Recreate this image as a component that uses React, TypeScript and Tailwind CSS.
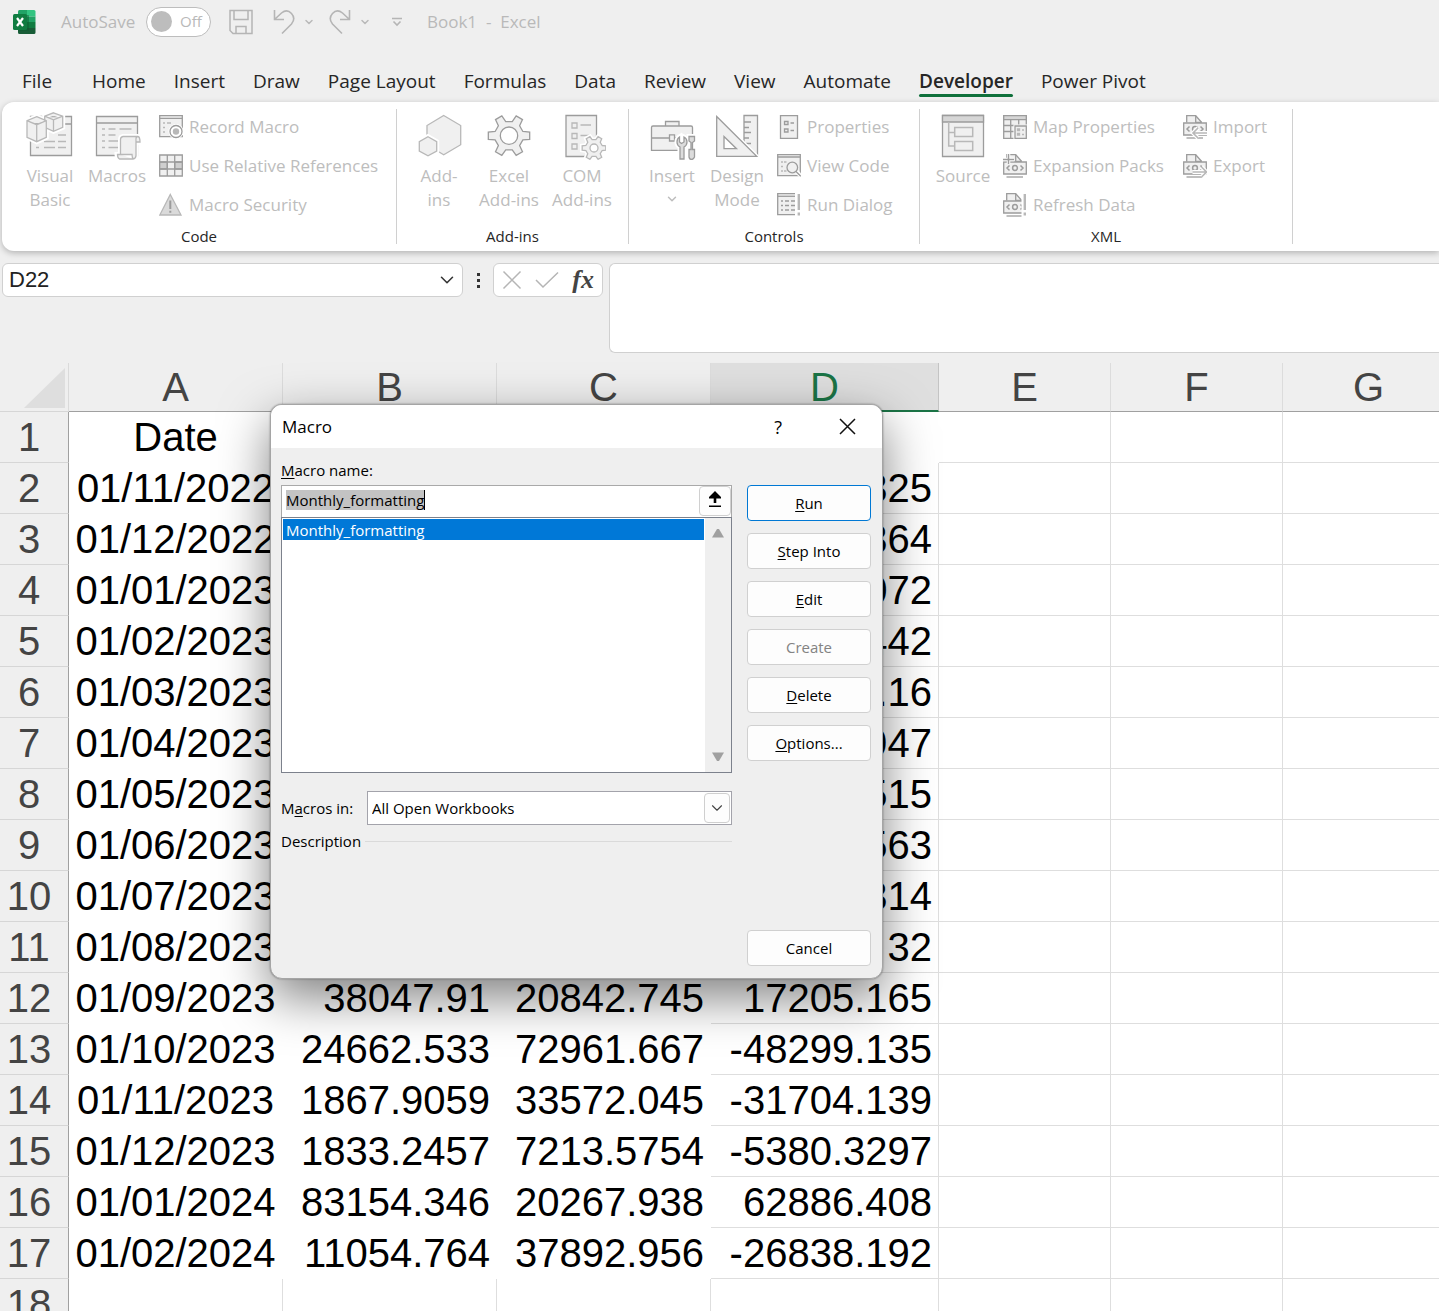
import React from 'react';
import { ChevronDown } from 'lucide-react';

const D = '#9c9c9c';
const L = '#b8b8b8';
const F = '#f0f0f0';

const Big: React.FC<{ children: React.ReactNode }> = ({ children }) => (
    <svg width="48" height="48" viewBox="0 0 48 48" fill="none" stroke={D} strokeWidth="1.3" aria-hidden="true">
        {children}
    </svg>
);

const Small: React.FC<{ children: React.ReactNode }> = ({ children }) => (
    <svg width="24" height="24" viewBox="0 0 24 24" fill="none" stroke={D} strokeWidth="1.3" className="shrink-0" aria-hidden="true">
        {children}
    </svg>
);

const gearPath = (cx: number, cy: number, outer: number, inner: number) => {
    const pts: string[] = [];
    for (let i = 0; i < 6; i++) {
        [[-17, inner], [-10, outer], [10, outer], [17, inner]].forEach(([deg, r]) => {
            const a = ((i * 60 + deg) * Math.PI) / 180;
            pts.push(`${(cx + r * Math.cos(a)).toFixed(2)} ${(cy + r * Math.sin(a)).toFixed(2)}`);
        });
    }
    return `M${pts.join('L')}Z`;
};

const VisualBasicIcon = () => (
    <Big>
        <path d="M4.5 4.5h41v39h-41zM4.5 12h41" fill={F} />
        <path d="M32 23h8M18 29.5h11M32 29.5h8M10 35.5h3M18 35.5h11M32 35.5h8" stroke={L} />
        <path d="M10.7 4.7l9.6 4v16.6l-9.6 4.4L1 25.3V8.7z" stroke="#fff" strokeWidth="5" />
        <path d="M27.5.8l9.2 3.4v11.1l-9.2 4-8.8-4V4.2z" stroke="#fff" strokeWidth="5" />
        <path d="M27.5.8l9.2 3.4v11.1l-9.2 4-8.8-4V4.2zM18.7 4.2l8.8 3.6 9.2-3.6M27.5 7.8v11.5" fill={F} stroke={L} />
        <path d="M10.7 4.7l9.6 4v16.6l-9.6 4.4L1 25.3V8.7zM1 8.7l9.7 4 9.6-4M10.7 12.7v17" fill={F} stroke={L} />
    </Big>
);

const MacrosIcon = () => (
    <Big>
        <path d="M3.5 4.5h41v39h-41zM3.5 11h41" fill={F} />
        <path d="M9 17h3M15.5 17h7M26.5 17h12M9 23h3M15.5 23h7M9 29h3M15.5 29h10M9 35.5h3M15.5 35.5h10" stroke={L} />
        <path d="M30 24.5h15q2.5 1 2.5 6h-4.5v13q0 3-3 3.5H26q-2-1-2-4.500h3.500V27.500q0-2.500 2.500-3z" stroke="#fff" strokeWidth="5" fill="#fff" />
        <path d="M30 24.500q-2.500.5-2.500 3v15H24.500q0 3.500 2 4.500H40q3-.5 3-3.500V27q0-2.500 2-2.500zM45 24.500q2 .5 2 5.500h-4M27.500 42.500h11.500q0 3.500 1.500 4.500" fill={F} stroke={L} />
    </Big>
);

const HexagonsIcon = () => (
    <Big>
        <path d="M28.700 3.500l17 10v19.200l-17 10-16.700-10V13.500z" fill={F} stroke={L} />
        <path d="M13 24.700l8.700 5V39L13 43.800 4.300 39v-9.300z" fill="#fff" stroke="#fff" strokeWidth="5" />
        <path d="M13 24.700l8.700 5V39L13 43.800 4.300 39v-9.300z" fill={F} stroke={L} />
    </Big>
);

const GearIcon = () => (
    <Big>
        <path d={gearPath(24, 23.7, 21, 14.5)} fill={F} />
        <circle cx="24" cy="23.700" r="8.700" fill="#fff" />
    </Big>
);

const ComIcon = () => (
    <Big>
        <path d="M8 3.500h30.500v41H8z" fill={F} />
        <path d="M14 11h5v5h-5zM14 21.500h5v5h-5zM14 32h5v5h-5zM22.500 13H33M22.500 23.500H33" stroke={L} />
        <path d={gearPath(36, 36, 12, 8.5)} fill="#fff" stroke="#fff" strokeWidth="4.500" />
        <path d={gearPath(36, 36, 12, 8.5)} fill={F} stroke={L} />
        <circle cx="36" cy="36" r="4" fill="#fff" stroke={L} />
    </Big>
);

const ToolboxIcon = () => (
    <Big>
        <path d="M17.500 14V9.500h13.500V14M3.500 15.500q0-1.500 1.500-1.500h38q1.500 0 1.500 1.500v22.800h-41zM3.500 26h18M27 26h5" fill={F} />
        <path d="M21.500 22.800h5v6.200h-5z" fill={F} />
        <path d="M31.500 25v5l2 1.500 2.500-1.500v-5q3 1.500 3 5t-3 5V47h-4V35q-3-1.500-3-5t2.500-5zM41 24.500h5.500V29l-2 1.500v7h2V45q-1 2.500-3 2.500T41 45v-7.500h2v-7L41 29z" fill="#fff" stroke="#fff" strokeWidth="5" />
        <path d="M31.500 25v5l2 1.500 2.500-1.500v-5q3 1.500 3 5t-3 5V47h-4V35q-3-1.500-3-5t2.500-5z" fill="#dcdcdc" stroke={D} />
        <path d="M41 24.500h5.500V29l-2 1.500v7h2V45q-1 2.500-3 2.500T41 45v-7.500h2v-7L41 29z" fill="#dcdcdc" stroke={D} />
    </Big>
);

const DesignIcon = () => (
    <Big>
        <path d="M31 3.500h13.500v41H31z" fill={F} />
        <path d="M31 10h7M31 15.500h5M31 20.500h7M31 26h5M31 31.500h7" />
        <path d="M3.700 4.500l40 39.800h-40z" fill={F} stroke="#fff" strokeWidth="4" />
        <path d="M3.700 4.500l40 39.800h-40z" fill={F} />
        <path d="M11 24.500l12.500 12.200H11z" fill="#fff" />
    </Big>
);

const SourceIcon = () => (
    <Big>
        <path d="M3.500 3.500h41v41h-41z" fill={F} />
        <path d="M3.500 3.500h41V10h-41z" fill="#d6d6d6" />
        <path d="M9.700 10v24h6M9.700 20.500h6M15.700 15.500h18v9h-18zM15.700 29.500h18v9h-18z" stroke={L} strokeWidth="1.500" />
    </Big>
);

const RecordIcon = () => (
    <Small>
        <path d="M.7.7h22.600v21H.7zM.7 3.300h22.600" fill={F} />
        <path d="M4 8h2M8 8h4M4 12.500h2M4 17h2" stroke={L} />
        <circle cx="17" cy="16.500" r="7.500" fill="#fff" stroke="none" />
        <circle cx="17" cy="16.500" r="6" fill="#fff" stroke={D} />
        <circle cx="17" cy="16.500" r="3.200" fill={L} stroke="none" />
    </Small>
);

const GridIcon = () => (
    <Small>
        <path d="M.7 1h22.600v21H.7z" fill={F} />
        <path d="M.7 8h7.600v7H.7zM15.700 8h7.600v7h-7.600z" fill="#cfcfcf" />
        <path d="M.7 8h22.600M.7 15h22.600M8.300 1v21M15.700 1v21" />
    </Small>
);

const WarningIcon = () => (
    <Small>
        <path d="M11.300 1.500L22 22H.8z" fill="#dadada" stroke={L} />
        <path d="M11.300 7.500V16M11.300 17.800v2" strokeWidth="2" />
    </Small>
);

const PropertiesIcon = () => (
    <Small>
        <path d="M3.500.7h17v22.600h-17z" fill={F} />
        <path d="M7.500 6.500H11v3H7.500zM7.500 14H11v3H7.500zM13.500 8H17M13.500 15.500H17" />
    </Small>
);

const ViewCodeIcon = () => (
    <Small>
        <path d="M.7.7h22.600v21H.7zM.7 3h22.600" fill={F} />
        <path d="M4 8h2M7 8h2.500M4 12.500h2M4 17h2M7 17h2.500" stroke={L} />
        <path d="M19 17l5 5" stroke="#fff" strokeWidth="4" />
        <circle cx="15.300" cy="13.500" r="5.300" fill={F} stroke={D} />
        <path d="M19 17.500l4.700 4.700" />
    </Small>
);

const RunDialogIcon = () => (
    <Small>
        <path d="M18 .7H.7v21H18" fill={F} />
        <path d="M.7 3.300H18" />
        <path d="M4 8h2M8 8h4M14 8h4M4 12.500h2M8 12.500h4M14 12.500h4M4 17h2M8 17h4M14 17h4" />
        <path d="M21.800 1v16M21.800 19.500v3" stroke={L} strokeWidth="2.400" />
    </Small>
);

const MapPropertiesIcon = () => (
    <Small>
        <path d="M.7.7h22.600v22.600H.7z" fill={F} />
        <path d="M.7.7h22.600v4H.7z" fill="#d6d6d6" />
        <path d="M.7 10.500h22.600M.7 16.500h12M7.700 4.700v18.600M15.700 4.700v6" />
        <path d="M10.500 9.500H24V24H10.500z" fill="#fff" stroke="none" />
        <path d="M12 11h11.300v12.300H12z" fill={F} />
        <path d="M14.500 14h2v1.500h-2zM14.500 18.500h2V20h-2zM19 15h2M19 19.500h2" stroke={L} />
    </Small>
);

const XmlDocIcon: React.FC<{ kind: 'import' | 'export' | 'expand' | 'refresh' }> = ({ kind }) => (
    <Small>
        <path d="M3.700 7.500V.7h9l6 6.800" fill={F} />
        <path d="M12.700.7v6.800h6" />
        <path d="M.7 8h22.600v12H.7z" fill={F} />
        <path d="M3.500 23H20" />
        <path d="M6.500 11.500L4 14l2.500 2.500M17.500 11.500L20 14l-2.500 2.500" strokeWidth="1.500" />
        <circle cx="12" cy="14" r="2.400" strokeWidth="1.500" />
        {kind === 'import' && (
            <>
                <path d="M10.500 18H24M15 13l-5 5 5 5" stroke="#fff" strokeWidth="4" />
                <path d="M10.500 18H24M15 13l-5 5 5 5" stroke={L} strokeWidth="1.600" />
            </>
        )}
        {kind === 'export' && (
            <>
                <path d="M9.500 18H23M18.500 13l5 5-5 5" stroke="#fff" strokeWidth="4" />
                <path d="M9.500 18H23M18.500 13l5 5-5 5" stroke={L} strokeWidth="1.600" />
            </>
        )}
        {kind === 'expand' && (
            <>
                <path d="M0 5.500h11M5.500 0v10" stroke="#fff" strokeWidth="3.500" />
                <path d="M0 5.500h11M5.500 0v10" strokeWidth="1.500" />
            </>
        )}
        {kind === 'refresh' && (
            <>
                <path d="M21.500 0v24" stroke="#fff" strokeWidth="6" />
                <path d="M21.800 1v16M21.800 19.500v3" stroke={L} strokeWidth="2.400" />
            </>
        )}
    </Small>
);

const BigButton: React.FC<{ icon: React.ReactNode; lines: string[]; width: string; menu?: boolean }> = ({ icon, lines, width, menu }) => (
    <button className={`${width} flex flex-col items-center pt-[3px] text-[17px] leading-6 text-[#bdbdbd]`}>
        {icon}
        <span className="mt-1 block">{lines[0]}</span>
        {lines[1] && <span className="block">{lines[1]}</span>}
        {menu && <ChevronDown size={14} className="mt-1" strokeWidth={2.5} />}
    </button>
);

const SmallButton: React.FC<{ icon: React.ReactNode; label: string }> = ({ icon, label }) => (
    <button className="flex h-9 items-center gap-1.5 whitespace-nowrap text-[17px] text-[#bdbdbd]">
        {icon}
        {label}
    </button>
);

const Group: React.FC<{ title: string; width: string; pad: string; children: React.ReactNode }> = ({ title, width, pad, children }) => (
    <section className={`${width} my-[7px] flex shrink-0 flex-col border-r border-[#d0d0d0]`}>
        <div className={`${pad} flex flex-1 items-start`}>{children}</div>
        <h2 className="text-center text-[15px] leading-4 text-[#262626]">{title}</h2>
    </section>
);

const tabs = ['File', 'Home', 'Insert', 'Draw', 'Page Layout', 'Formulas', 'Data', 'Review', 'View', 'Automate', 'Developer', 'Power Pivot'];

const columns = ['A', 'B', 'C', 'D', 'E', 'F', 'G'];

const rows: string[][] = [
    ['Date', '', '', ''],
    ['01/11/2022', '', '', '325'],
    ['01/12/2022', '', '', '364'],
    ['01/01/2023', '', '', '072'],
    ['01/02/2023', '', '', '442'],
    ['01/03/2023', '', '', '.16'],
    ['01/04/2023', '', '', '947'],
    ['01/05/2023', '', '', '515'],
    ['01/06/2023', '', '', '563'],
    ['01/07/2023', '', '', '314'],
    ['01/08/2023', '', '', '32'],
    ['01/09/2023', '38047.91', '20842.745', '17205.165'],
    ['01/10/2023', '24662.533', '72961.667', '-48299.135'],
    ['01/11/2023', '1867.9059', '33572.045', '-31704.139'],
    ['01/12/2023', '1833.2457', '7213.5754', '-5380.3297'],
    ['01/01/2024', '83154.346', '20267.938', '62886.408'],
    ['01/02/2024', '11054.764', '37892.956', '-26838.192'],
    ['', '', '', ''],
];

const cellBorder = (row: number, col: number) => {
    const last = row === rows.length - 1;
    if (col < 3) return last ? 'border-[#dedede]' : 'border-transparent';
    if (col === 3 && row === 0) return 'border-transparent';
    return 'border-[#dedede]';
};

const TitleBar = () => (
    <header className="flex h-[43px] shrink-0 items-center pl-[13px] text-[17px] text-[#b9b9b9]">
        <svg width="24" height="24" viewBox="0 0 24 24" aria-label="Excel" className="shrink-0">
            <path d="M5 1.500Q5 0 6.500 0H14v6.500H5z" fill="#21a366" />
            <path d="M14 0h7q1.500 0 1.500 1.500v5H14z" fill="#33c481" />
            <path d="M5 6.500h9V12H5z" fill="#107c41" />
            <path d="M14 6.500h8.500V12H14z" fill="#21a366" />
            <path d="M14 12h8.500v6H14z" fill="#107c41" />
            <path d="M5 12h9v6h8.500v4.500Q22.500 24 21 24H6.500Q5 24 5 22.500z" fill="#185c37" />
            <path d="M5 5h10q1 0 1 1v14q0 1-1 1H5z" fill="#0b5a2f" opacity=".5" />
            <rect y="4" width="14" height="16" rx="1.500" fill="#107c41" />
            <path d="M4 8l6 8M10 8l-6 8" stroke="#fff" strokeWidth="2.200" />
        </svg>
        <span className="ml-6 w-[85px]">AutoSave</span>
        <button role="switch" aria-checked="false" aria-label="AutoSave" className="flex h-[30px] w-[65px] items-center gap-2 rounded-full border border-[#bdbdbd] bg-white pl-1 text-[15px]">
            <span className="h-[21px] w-[21px] rounded-full bg-[#bdbdbd]" />
            Off
        </button>
        <button aria-label="Save" className="ml-[18px]">
            <svg width="24" height="26" viewBox="0 0 24 26" fill="none" stroke="#b5b5b5" strokeWidth="1.500">
                <path d="M1 1.500h22v23H4l-3-3zM5 1.500v9h14v-9M7 24.500v-7h10v7" />
            </svg>
        </button>
        <button aria-label="Undo" className="ml-5 flex items-center gap-2">
            <svg width="22" height="26" viewBox="0 0 22 26" fill="none" stroke="#b5b5b5" strokeWidth="1.600">
                <path d="M1.500 1v9.500H11M1.500 10.500L8.500 4Q14-.5 18.500 4.500t0 10.500L9 24.500" />
            </svg>
            <ChevronDown size={12} strokeWidth={3} />
        </button>
        <button aria-label="Redo" className="ml-3.5 flex items-center gap-2">
            <svg width="22" height="26" viewBox="0 0 22 26" fill="none" stroke="#b5b5b5" strokeWidth="1.600">
                <path d="M20.500 1v9.500H11M20.500 10.500L13.500 4Q8-.5 3.500 4.500t0 10.500L13 24.500" />
            </svg>
            <ChevronDown size={12} strokeWidth={3} />
        </button>
        <button aria-label="Customize Quick Access Toolbar" className="ml-5">
            <svg width="12" height="10" viewBox="0 0 12 10" fill="none" stroke="#b5b5b5" strokeWidth="1.600">
                <path d="M1 1.500h10M2.500 4.500L6 8l3.500-3.500" />
            </svg>
        </button>
        <span className="ml-6 whitespace-pre">Book1  -  Excel</span>
    </header>
);

const Tabs = () => (
    <nav className="flex h-[59px] shrink-0 items-start gap-7 pl-[22px] pt-[26px]">
        {tabs.map((tab) => (
            <button
                key={tab}
                className={`flex flex-col whitespace-nowrap text-[19px] leading-6 text-[#262626] ${tab === 'File' ? 'mr-3' : ''} ${tab === 'Developer' ? 'font-semibold' : ''}`}
            >
                {tab}
                {tab === 'Developer' && <span className="mt-px h-[3px] w-full rounded-full bg-[#0f703b]" />}
            </button>
        ))}
    </nav>
);

const Ribbon = () => (
    <div className="ml-0.5 flex h-[149px] shrink-0 rounded-l-xl bg-white shadow-[0_2px_6px_rgba(0,0,0,0.25)]">
        <Group title="Code" width="w-[395px]" pad="pl-[15px]">
            <BigButton icon={<VisualBasicIcon />} lines={['Visual', 'Basic']} width="w-[66px]" />
            <BigButton icon={<MacrosIcon />} lines={['Macros']} width="w-[68px]" />
            <div className="flex flex-col gap-[3px] pl-2">
                <SmallButton icon={<RecordIcon />} label="Record Macro" />
                <SmallButton icon={<GridIcon />} label="Use Relative References" />
                <SmallButton icon={<WarningIcon />} label="Macro Security" />
            </div>
        </Group>
        <Group title="Add-ins" width="w-[232px]" pad="px-[7px]">
            <BigButton icon={<HexagonsIcon />} lines={['Add-', 'ins']} width="w-[70px]" />
            <BigButton icon={<GearIcon />} lines={['Excel', 'Add-ins']} width="w-[70px]" />
            <BigButton icon={<ComIcon />} lines={['COM', 'Add-ins']} width="w-[76px]" />
        </Group>
        <Group title="Controls" width="w-[291px]" pad="pl-2.5">
            <BigButton icon={<ToolboxIcon />} lines={['Insert']} width="w-[66px]" menu />
            <BigButton icon={<DesignIcon />} lines={['Design', 'Mode']} width="w-[64px]" />
            <div className="flex flex-col gap-[3px] pl-2">
                <SmallButton icon={<PropertiesIcon />} label="Properties" />
                <SmallButton icon={<ViewCodeIcon />} label="View Code" />
                <SmallButton icon={<RunDialogIcon />} label="Run Dialog" />
            </div>
        </Group>
        <Group title="XML" width="w-[373px]" pad="pl-2.5">
            <BigButton icon={<SourceIcon />} lines={['Source']} width="w-[66px]" />
            <div className="flex w-[187px] flex-col gap-[3px] pl-[7px]">
                <SmallButton icon={<MapPropertiesIcon />} label="Map Properties" />
                <SmallButton icon={<XmlDocIcon kind="expand" />} label="Expansion Packs" />
                <SmallButton icon={<XmlDocIcon kind="refresh" />} label="Refresh Data" />
            </div>
            <div className="flex flex-col gap-[3px]">
                <SmallButton icon={<XmlDocIcon kind="import" />} label="Import" />
                <SmallButton icon={<XmlDocIcon kind="export" />} label="Export" />
            </div>
        </Group>
    </div>
);

const FormulaBar = () => (
    <div className="flex shrink-0 items-start pb-2.5 pl-0.5 pt-3">
        <div className="flex h-[34px] w-[461px] items-center rounded-md border border-[#d0d0d0] bg-white pr-1">
            <input
                aria-label="Name Box"
                defaultValue="D22"
                className="min-w-0 flex-1 bg-transparent pl-1.5 font-['Liberation_Sans',Arial,sans-serif] text-[22px] leading-7 text-[#222] outline-none"
            />
            <button aria-label="Name list">
                <ChevronDown size={22} strokeWidth={1.7} color="#333" />
            </button>
        </div>
        <div className="flex h-[34px] w-[30px] flex-col items-center justify-center gap-[3px]">
            <span className="h-[3px] w-[3px] bg-[#333]" />
            <span className="h-[3px] w-[3px] bg-[#333]" />
            <span className="h-[3px] w-[3px] bg-[#333]" />
        </div>
        <div className="flex h-[34px] w-[110px] items-center justify-between rounded-md border border-[#d0d0d0] bg-white px-2">
            <button aria-label="Cancel entry">
                <svg width="20" height="20" viewBox="0 0 20 20" stroke="#b5b5b5" strokeWidth="1.500">
                    <path d="M1.500 1.500l17 17M18.500 1.500l-17 17" />
                </svg>
            </button>
            <button aria-label="Enter">
                <svg width="24" height="18" viewBox="0 0 24 18" fill="none" stroke="#b5b5b5" strokeWidth="1.500">
                    <path d="M1 9l7 7L23 1.500" />
                </svg>
            </button>
            <button aria-label="Insert Function" className="font-['Liberation_Serif',serif] text-[26px] font-bold italic leading-7 text-[#444]">
                fx
            </button>
        </div>
        <textarea aria-label="Formula Bar" className="ml-1.5 h-[90px] flex-1 resize-none rounded-l-md border border-r-0 border-[#d0d0d0] bg-white outline-none" />
    </div>
);

const Sheet = () => (
    <div className="min-h-0 flex-1 overflow-hidden">
        <table className="w-[1455px] min-w-full table-fixed border-separate border-spacing-0 font-['Liberation_Sans',Arial,sans-serif] text-[40px] leading-[46px]">
            <colgroup>
                <col className="w-[69px]" />
                <col className="w-[214px]" />
                <col className="w-[214px]" />
                <col className="w-[214px]" />
                <col className="w-[228px]" />
                <col className="w-[172px]" />
                <col className="w-[172px]" />
                <col className="w-[172px]" />
            </colgroup>
            <thead>
                <tr className="h-[49px] text-[#444]">
                    <td className="border-b border-r border-b-[#d6d6d6] border-r-[#dadada] p-0">
                        <svg width="66" height="44" viewBox="0 0 66 44" className="block">
                            <path d="M65 3v40H24z" fill="#dedede" />
                        </svg>
                    </td>
                    {columns.map((c) => (
                        <th
                            key={c}
                            scope="col"
                            className={
                                c === 'D'
                                    ? 'border-b-2 border-r border-b-[#1b7446] border-r-[#c4c4c4] bg-[#dfdfdf] p-0 font-normal text-[#1b7446]'
                                    : 'border-b border-r border-b-[#a0a0a0] border-r-[#dcdcdc] p-0 font-normal'
                            }
                        >
                            {c}
                        </th>
                    ))}
                </tr>
            </thead>
            <tbody>
                {rows.map((row, r) => (
                    <tr key={r} className="h-[51px]">
                        <th scope="row" className="border-b border-r border-b-[#d6d6d6] border-r-[#a0a0a0] p-0 pr-2.5 text-center font-normal text-[#444]">
                            {r + 1}
                        </th>
                        {columns.map((c, i) => (
                            <td
                                key={c}
                                className={`border-b border-r bg-white p-0 text-black ${cellBorder(r, i)} ${i === 0 ? 'text-center' : 'pr-1.5 text-right'}`}
                            >
                                {row[i]}
                            </td>
                        ))}
                    </tr>
                ))}
            </tbody>
        </table>
    </div>
);

const Key: React.FC<{ children: string }> = ({ children }) => <span className="underline underline-offset-2">{children}</span>;

const DialogButton: React.FC<{ children: React.ReactNode; primary?: boolean; disabled?: boolean }> = ({ children, primary, disabled }) => (
    <button
        disabled={disabled}
        className={`h-9 w-full rounded border bg-[#fdfdfd] ${primary ? 'border-[#0078d4]' : 'border-[#d0d0d0]'} ${disabled ? 'text-[#838383]' : 'text-black'}`}
    >
        {children}
    </button>
);

const MacroDialog = () => (
    <div
        role="dialog"
        aria-labelledby="macro-title"
        className="absolute left-[270px] top-[404px] flex h-[575px] w-[613px] flex-col overflow-hidden rounded-xl border border-[#a5a5a5] bg-[#efefef] text-[15px] leading-5 text-black shadow-[0_0_2px_rgba(0,0,0,0.4),0_18px_50px_rgba(0,0,0,0.5)]"
    >
        <div className="flex h-[43px] items-center bg-white pl-[11px] pr-[26px]">
            <h1 id="macro-title" className="flex-1 text-[17px]">Macro</h1>
            <button aria-label="Help" className="mr-[57px] text-lg">?</button>
            <button aria-label="Close">
                <svg width="17" height="17" viewBox="0 0 17 17" stroke="#111" strokeWidth="1.500">
                    <path d="M1 1l15 15M16 1L1 16" />
                </svg>
            </button>
        </div>
        <div className="flex flex-1 gap-[15px] pb-3 pl-2.5 pr-[11px]">
            <div className="flex flex-1 flex-col">
                <label htmlFor="macro-name" className="mb-[5px] mt-3">
                    <Key>M</Key>acro name:
                </label>
                <div className="flex h-8 items-start border border-b-0 border-[#a9a9a9] bg-white pl-1">
                    <div className="flex-1 pt-1">
                        <input id="macro-name" defaultValue="Monthly_formatting" className="field-sizing-content block h-5 border-r border-black bg-[#c3c3c3] outline-none" />
                    </div>
                    <button aria-label="Collapse dialog" className="flex h-[30px] w-8 items-center justify-center rounded border border-[#d0d0d0] bg-[#fdfdfd] pb-1">
                        <svg width="12" height="16" viewBox="0 0 12 16" fill="#000">
                            <path d="M6 0l6 6v1.500H7.300V12H4.700V7.500H0V6zM0 14.500h12V16H0z" />
                        </svg>
                    </button>
                </div>
                <div className="flex h-64 border border-[#7c818c] bg-white">
                    <ul role="listbox" aria-label="Macros" className="flex-1 p-px">
                        <li role="option" aria-selected="true" className="bg-[#0078d7] pl-[3px] pt-px text-white">
                            Monthly_formatting
                        </li>
                    </ul>
                    <div className="flex w-[26px] flex-col items-center justify-between bg-[#efefef] py-2.5">
                        <svg width="12" height="10" viewBox="0 0 12 10">
                            <path d="M5 1h2l5 8.500H0z" fill="#a0a0a0" />
                        </svg>
                        <svg width="12" height="10" viewBox="0 0 12 10">
                            <path d="M5 9h2l5-8.500H0z" fill="#a0a0a0" />
                        </svg>
                    </div>
                </div>
                <div className="mt-[18px] flex items-center">
                    <label htmlFor="macros-in" className="w-[86px]">
                        M<Key>a</Key>cros in:
                    </label>
                    <div className="relative flex-1">
                        <select id="macros-in" className="h-[34px] w-full appearance-none border border-[#a3a3ab] bg-white pl-1 outline-none">
                            <option>All Open Workbooks</option>
                        </select>
                        <span className="pointer-events-none absolute inset-y-0.5 right-0.5 flex w-[26px] items-center justify-center rounded-sm border border-[#cfcfcf] bg-[#fdfdfd]">
                            <ChevronDown size={18} strokeWidth={1.5} color="#444" />
                        </span>
                    </div>
                </div>
                <div className="mt-1.5 flex items-center gap-1">
                    <span>Description</span>
                    <span className="h-px flex-1 bg-[#dadada]" />
                </div>
            </div>
            <div className="flex w-[124px] flex-col gap-3 pt-[37px]">
                <DialogButton primary><Key>R</Key>un</DialogButton>
                <DialogButton><Key>S</Key>tep Into</DialogButton>
                <DialogButton><Key>E</Key>dit</DialogButton>
                <DialogButton disabled>Create</DialogButton>
                <DialogButton><Key>D</Key>elete</DialogButton>
                <DialogButton><Key>O</Key>ptions...</DialogButton>
                <div className="mt-auto">
                    <DialogButton>Cancel</DialogButton>
                </div>
            </div>
        </div>
    </div>
);

export default function App() {
    return (
        <div className="relative flex h-screen flex-col overflow-hidden bg-[#efefef] font-['Open_Sans','Noto_Sans',sans-serif]">
            <TitleBar />
            <Tabs />
            <Ribbon />
            <FormulaBar />
            <Sheet />
            <MacroDialog />
        </div>
    );
}
